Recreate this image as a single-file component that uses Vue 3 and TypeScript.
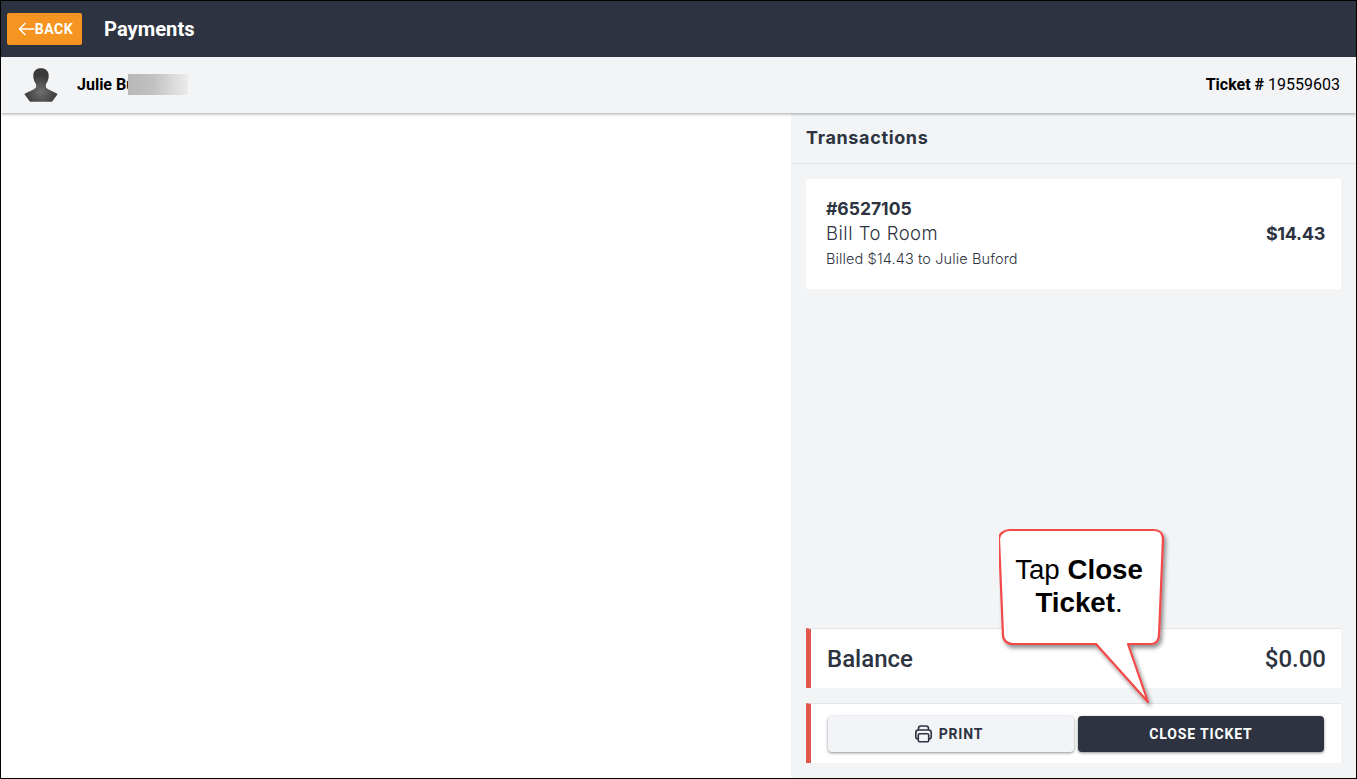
<script setup lang="ts">
const ticket = '19559603'
</script>

<template>
  <div class="frame">
    <header class="topbar">
      <button class="back">
        <svg width="17" height="14" viewBox="0 0 17 14" fill="none" stroke="#fff" stroke-width="1.5"><path d="M16.5 7H1.5M7.5 1L1.5 7l6 6" /></svg>
        <span>BACK</span>
      </button>
      <h1>Payments</h1>
    </header>
    <div class="guest">
      <div class="who">
        <svg class="avatar" width="36" height="36" viewBox="0 0 36 36">
          <defs>
            <radialGradient id="bust" cx="50%" cy="70%" r="50%">
              <stop offset="0" stop-color="#6e6e6e" />
              <stop offset="1" stop-color="#3a3a3a" />
            </radialGradient>
          </defs>
          <path fill="url(#bust)" d="M17.800 1.300c-4.500 0-7.500 2.500-7.500 7.500 0 3 1 6 2.500 8 .5 1.500.5 3 0 4-2 2-6 3.500-11.500 6.200L7 34.700H29L34.700 27c-5.500-2.700-9.500-4.200-11.500-6.200-.5-1-.5-2.500 0-4 1.500-2 2.500-5 2.500-8 0-5-3-7.500-7.900-7.500z" />
        </svg>
        <span class="name"><span class="name-text">Julie Bu</span><span class="blur"></span></span>
      </div>
      <div class="ticket"><b>Ticket #</b> {{ ticket }}</div>
    </div>
    <main class="content">
      <div class="left"></div>
      <aside class="right">
        <div class="tx-head">Transactions</div>
        <div class="card">
          <div>
            <div class="tx-id">#6527105</div>
            <div class="tx-type">Bill To Room</div>
            <div class="tx-note">Billed $14.43 to Julie Buford</div>
          </div>
          <div class="tx-amt">$14.43</div>
        </div>
        <div class="spacer"></div>
        <div class="balance">
          <span>Balance</span>
          <span>$0.00</span>
        </div>
        <div class="actions">
          <button class="btn print">
            <svg width="17" height="18" viewBox="0 0 17 18" fill="none" stroke="#2d3340" stroke-width="1.6">
              <path d="M3.500 5V3.500C3.500 2 4.500 1 6 1h5c1.500 0 2.500 1 2.500 2.500V5" />
              <path d="M3 14c-1.300 0-2.200-.9-2.200-2.200V7.500C.8 6 2 5 3.500 5h10c1.500 0 2.700 1 2.700 2.500v4.300c0 1.300-.9 2.200-2.200 2.200" />
              <rect x="3.300" y="8.800" width="10.400" height="8" rx="1.300" />
            </svg>
            <span>PRINT</span>
          </button>
          <button class="btn close">CLOSE TICKET</button>
        </div>
      </aside>
    </main>
    <div class="callout">
      <svg class="bubble" width="176" height="186" viewBox="0 0 176 186">
        <defs>
          <filter id="sh" x="-10%" y="-10%" width="125%" height="125%">
            <feDropShadow dx="2" dy="3" stdDeviation="2" flood-color="#000" flood-opacity=".45" />
          </filter>
        </defs>
        <path filter="url(#sh)" fill="#fff" stroke="#f24848" stroke-width="2.200" stroke-linejoin="round"
          d="M11 1H155C160 1 164 4 164 10L160 106C160 111 157 115 152 115H129L149 173L97 115H14C8 115 4 111 4 106L0 10C0 5 5 1 11 1Z" />
      </svg>
      <div class="callout-text">Tap <b>Close Ticket</b>.</div>
    </div>
  </div>
</template>

<style>
html, body { margin: 0; background: #fff; }
</style>

<style scoped>
.frame {
  position: relative;
  box-sizing: border-box;
  width: 1357px;
  height: 779px;
  border: 1px solid #000;
  display: flex;
  flex-direction: column;
  overflow: hidden;
  font-family: Roboto, sans-serif;
  color: #2d3340;
}
.topbar {
  height: 56px;
  flex: none;
  background: #2d3340;
  display: flex;
  align-items: center;
  padding-left: 6px;
}
.back {
  width: 75px;
  height: 32px;
  border: 0;
  border-radius: 2px;
  background: #f59420;
  color: #fff;
  display: flex;
  align-items: center;
  justify-content: center;
  gap: 0;
  padding: 0 0 0 2px;
  font: 700 14px Roboto, sans-serif;
  letter-spacing: .5px;
}
h1 {
  margin: 0 0 0 22px;
  font: 700 20.200px Roboto, sans-serif;
  color: #fff;
}
.guest {
  height: 56px;
  flex: none;
  box-sizing: border-box;
  background: #f3f4f6;
  display: flex;
  align-items: center;
  justify-content: space-between;
  padding: 0 16px 2px 22px;
  box-shadow: 0 1px 3px rgba(0, 0, 0, .35);
  position: relative;
  z-index: 1;
  color: #000;
  font-size: 16px;
}
.avatar { margin-top: 2px; filter: blur(.3px); }
.who { display: flex; align-items: center; gap: 18px; }
.name { font-weight: 700; display: flex; align-items: center; }
.name-text { white-space: nowrap; }
.blur {
  width: 60px;
  height: 21px;
  margin-left: -7px;
  background: linear-gradient(90deg, #b8b8b8, #c0c0c0 40%, #ececec);
}
.ticket b { font-weight: 700; }
.ticket { font-weight: 400; }
.content { flex: 1; display: flex; min-height: 0; }
.left { width: 790px; flex: none; background: #fff; }
.right {
  flex: 1;
  background: #f3f4f6;
  display: flex;
  flex-direction: column;
  padding-bottom: 15px;
}
.tx-head {
  height: 51px;
  box-sizing: border-box;
  flex: none;
  border-bottom: 1px solid #e2e3e7;
  padding: 14px 0 0 15px;
  font: 700 18px Inter, sans-serif;
  letter-spacing: .65px;
}
.card {
  margin: 15px 15px 0;
  height: 110px;
  flex: none;
  box-sizing: border-box;
  background: #fff;
  padding: 0 16px 0 20px;
  display: flex;
  align-items: center;
  justify-content: space-between;
  font-family: Inter, sans-serif;
}
.tx-id { font-size: 17.500px; font-weight: 700; line-height: 22px; }
.tx-type { font-size: 18.500px; font-weight: 300; line-height: 27px; letter-spacing: .5px; }
.tx-note { font-size: 14.500px; font-weight: 300; line-height: 23px; letter-spacing: .12px; }
.tx-amt { font-size: 18px; font-weight: 700; letter-spacing: -.3px; margin-bottom: 2px; }
.spacer { flex: 1; }
.balance {
  margin: 0 15px;
  height: 60px;
  flex: none;
  box-sizing: border-box;
  background: #fff;
  border-top: 1px solid #e4e5e8;
  border-left: 5px solid #e2574c;
  padding: 0 15px 0 16px;
  display: flex;
  align-items: center;
  justify-content: space-between;
  font-size: 24px;
  font-weight: 500;
}
.actions {
  margin: 15px 15px 0;
  height: 60px;
  flex: none;
  box-sizing: border-box;
  background: #fff;
  border-top: 1px solid #e4e5e8;
  border-left: 5px solid #e2574c;
  padding: 12px 17px 0 17px;
  display: grid;
  grid-template-columns: 1fr 1fr;
  gap: 4px;
  align-items: start;
}
.btn {
  height: 36px;
  border: 0;
  border-radius: 4px;
  padding: 0 0 1px;
  font: 700 14px Roboto, sans-serif;
  letter-spacing: .85px;
  display: flex;
  align-items: center;
  justify-content: center;
  box-shadow: 0 1px 3px rgba(0, 0, 0, .45);
}
.print { background: #f3f4f8; color: #2d3340; gap: 7px; padding-right: 4px; }
.close { background: #2d3340; color: #fff; }
.callout {
  position: absolute;
  left: 998px;
  top: 528px;
  width: 176px;
  height: 186px;
}
.bubble { position: absolute; left: 0; top: 0; }
.callout-text {
  position: absolute;
  left: 2px;
  top: 24px;
  width: 156px;
  text-align: center;
  font: 400 27.700px/33px "Liberation Sans", Arial, sans-serif;
  color: #000;
}
.callout-text b { font-weight: 700; }
</style>
